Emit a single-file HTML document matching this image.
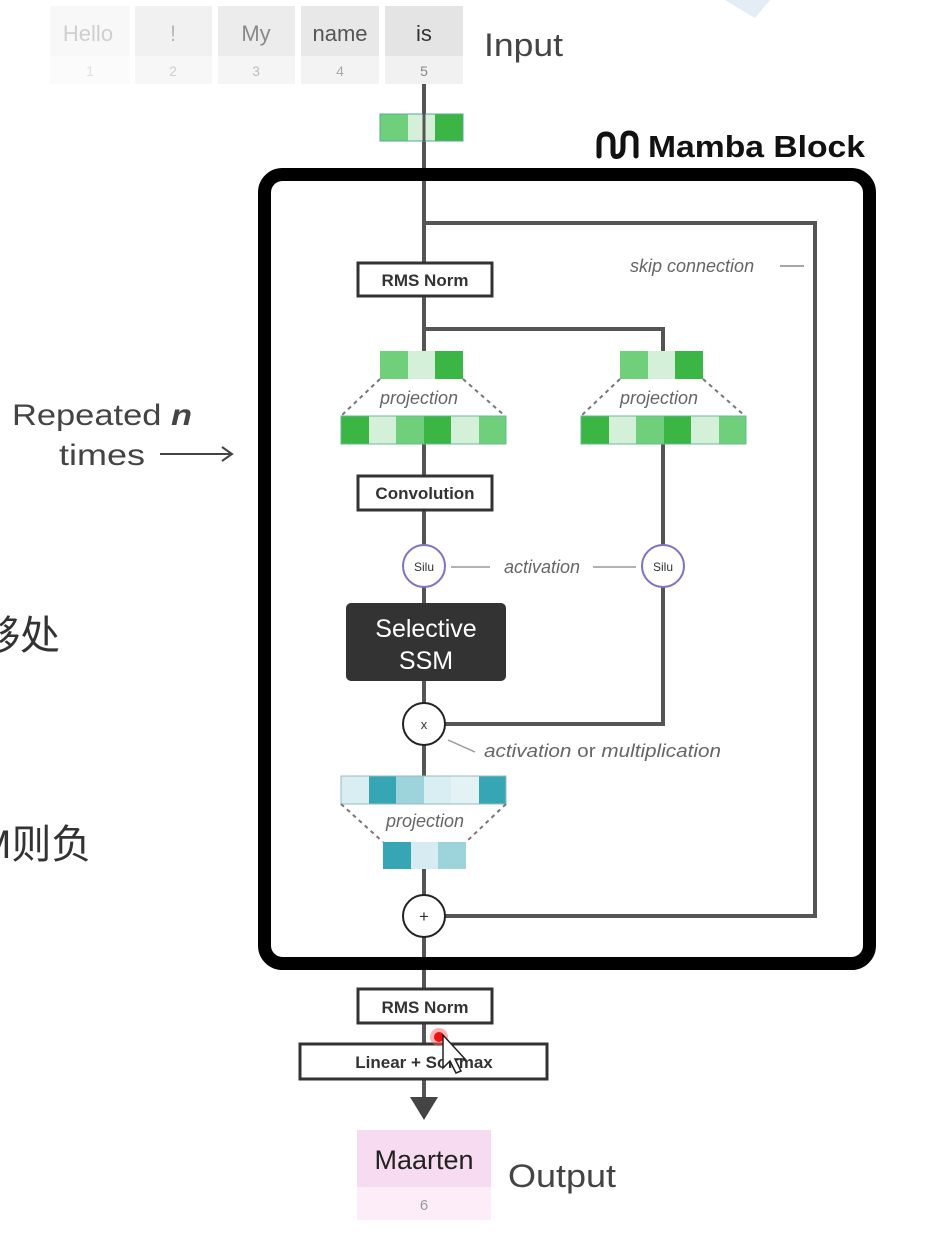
<!DOCTYPE html>
<html><head><meta charset="utf-8"><style>
html,body{margin:0;padding:0;background:#fff;width:927px;height:1239px;overflow:hidden}
svg{display:block}
text{font-family:"Liberation Sans","Noto Sans CJK SC",sans-serif}
</style></head><body>
<svg width="927" height="1239" viewBox="0 0 927 1239" xmlns="http://www.w3.org/2000/svg">
<path d="M725 0 L770 0 L755 18 Z" fill="#e4edf6"/>
<g font-size="22" text-anchor="middle">
<rect x="50" y="6" width="80" height="50" fill="#f8f8f8"/><rect x="50" y="56" width="80" height="28" fill="#fbfbfb"/>
<text x="88" y="41" fill="#cfcfcf">Hello</text><text x="90" y="76" font-size="14" fill="#e0e0e0">1</text>
<rect x="135" y="6" width="77" height="50" fill="#f1f1f1"/><rect x="135" y="56" width="77" height="28" fill="#f7f7f7"/>
<text x="173" y="41" fill="#b8b8b8">!</text><text x="173" y="76" font-size="14" fill="#cfcfcf">2</text>
<rect x="218" y="6" width="77" height="50" fill="#ececec"/><rect x="218" y="56" width="77" height="28" fill="#f5f5f5"/>
<text x="256" y="41" fill="#8a8a8a">My</text><text x="256" y="76" font-size="14" fill="#bdbdbd">3</text>
<rect x="301" y="6" width="78" height="50" fill="#e8e8e8"/><rect x="301" y="56" width="78" height="28" fill="#f3f3f3"/>
<text x="340" y="41" fill="#555">name</text><text x="340" y="76" font-size="14" fill="#aaa">4</text>
<rect x="385" y="6" width="78" height="50" fill="#e4e4e4"/><rect x="385" y="56" width="78" height="28" fill="#f1f1f1"/>
<text x="424" y="41" fill="#333">is</text><text x="424" y="76" font-size="14" fill="#888">5</text>
</g>
<text x="484" y="56" font-size="32" fill="#444" textLength="79" lengthAdjust="spacingAndGlyphs">Input</text>
<text x="12" y="425" font-size="30" fill="#444" textLength="180" lengthAdjust="spacingAndGlyphs">Repeated <tspan font-weight="bold" font-style="italic">n</tspan></text>
<text x="59" y="465" font-size="30" fill="#444" textLength="86" lengthAdjust="spacingAndGlyphs">times</text>
<path d="M160 454 H231 M222 447 L232 454 L222 461" stroke="#444" stroke-width="2" fill="none"/>
<text x="-20" y="649" font-size="40" fill="#333">够处</text>
<text x="-22" y="858" font-size="40" fill="#333">M则负</text>
<path d="M424 84 V1100" stroke="#555" stroke-width="4"/>
<rect x="380" y="114" width="28" height="27" fill="#6fcf7a"/><rect x="408" y="114" width="27" height="27" fill="#d5f0d8"/><rect x="435" y="114" width="28" height="27" fill="#3bb544"/>
<rect x="380" y="114" width="83" height="27" fill="none" stroke="#5a9" stroke-width="1"/>
<path d="M424 84 V141" stroke="#555" stroke-width="3"/>
<g transform="translate(596,130)" fill="none" stroke="#111" stroke-width="5" stroke-linecap="round">
<path d="M3 26 V12 Q3 4 10 4 Q17 4 17 12 V22 Q17 28 23 26 Q27 24 27 18 V10 Q27 3 33 3 Q39 3 40 9 V26"/>
</g>
<text x="648" y="157" font-size="31" font-weight="bold" fill="#111" textLength="217" lengthAdjust="spacingAndGlyphs">Mamba Block</text>
<rect x="264.5" y="174.5" width="605" height="789" rx="18" fill="none" stroke="#000" stroke-width="13"/>
<path d="M424 223 H815 V916 H440" stroke="#555" stroke-width="4" fill="none"/>
<text x="630" y="272" font-size="18" font-style="italic" fill="#666">skip connection</text>
<path d="M780 266 H804" stroke="#888" stroke-width="1.5"/>
<rect x="358" y="263" width="134" height="33" fill="#fff" stroke="#333" stroke-width="3"/>
<text x="425" y="286" font-size="17" font-weight="bold" fill="#333" text-anchor="middle">RMS Norm</text>
<path d="M424 329 H663 V724 H445" stroke="#555" stroke-width="4" fill="none"/>
<g id="pg">
<rect x="338" y="379" width="172" height="37" fill="#fff"/>
<rect x="380" y="351" width="28" height="28" fill="#6fcf7a"/><rect x="408" y="351" width="27" height="28" fill="#d5f0d8"/><rect x="435" y="351" width="28" height="28" fill="#3bb544"/>
<path d="M380 379 L341 416 M463 379 L505 416" stroke="#777" stroke-width="2" stroke-dasharray="4 4"/>
<text x="419" y="404" font-size="18" font-style="italic" fill="#666" text-anchor="middle">projection</text>
<rect x="341" y="416" width="28" height="28" fill="#3bb544"/><rect x="369" y="416" width="27" height="28" fill="#d5f0d8"/><rect x="396" y="416" width="28" height="28" fill="#6fcf7a"/><rect x="424" y="416" width="27" height="28" fill="#3bb544"/><rect x="451" y="416" width="28" height="28" fill="#d5f0d8"/><rect x="479" y="416" width="27" height="28" fill="#6fcf7a"/>
<rect x="341" y="416" width="165" height="28" fill="none" stroke="#6b9" stroke-width="1"/>
</g>
<use href="#pg" transform="translate(240,0)"/>
<rect x="358" y="476" width="134" height="34" fill="#fff" stroke="#333" stroke-width="3"/>
<text x="425" y="499" font-size="17" font-weight="bold" fill="#333" text-anchor="middle">Convolution</text>
<circle cx="424" cy="566" r="21" fill="#fff" stroke="#7f70c8" stroke-width="2"/>
<circle cx="663" cy="566" r="21" fill="#fff" stroke="#7f70c8" stroke-width="2"/>
<text x="424" y="571" font-size="12" fill="#333" text-anchor="middle">Silu</text>
<text x="663" y="571" font-size="12" fill="#333" text-anchor="middle">Silu</text>
<path d="M451 567 H490 M593 567 H636" stroke="#999" stroke-width="1.5"/>
<text x="542" y="573" font-size="18" font-style="italic" fill="#666" text-anchor="middle">activation</text>
<rect x="346" y="603" width="160" height="78" rx="5" fill="#333"/>
<text x="426" y="637" font-size="25" fill="#fff" text-anchor="middle">Selective</text>
<text x="426" y="669" font-size="25" fill="#fff" text-anchor="middle">SSM</text>
<circle cx="424" cy="724" r="21" fill="#fff" stroke="#222" stroke-width="2"/>
<text x="424" y="729" font-size="13" fill="#333" text-anchor="middle">x</text>
<path d="M448 740 L475 752" stroke="#999" stroke-width="1.5"/>
<text x="484" y="757" font-size="18" fill="#666" textLength="237" lengthAdjust="spacingAndGlyphs"><tspan font-style="italic">activation</tspan> or <tspan font-style="italic">multiplication</tspan></text>
<rect x="338" y="804" width="172" height="38" fill="#fff"/>
<rect x="341" y="776" width="28" height="28" fill="#d9eef2"/><rect x="369" y="776" width="27" height="28" fill="#37a6b4"/><rect x="396" y="776" width="28" height="28" fill="#9dd4dc"/><rect x="424" y="776" width="27" height="28" fill="#d9eef2"/><rect x="451" y="776" width="28" height="28" fill="#e3f2f5"/><rect x="479" y="776" width="27" height="28" fill="#37a6b4"/>
<rect x="341" y="776" width="165" height="28" fill="none" stroke="#9bb" stroke-width="1"/>
<path d="M341 804 L383 842 M506 804 L466 842" stroke="#777" stroke-width="2" stroke-dasharray="4 4"/>
<text x="425" y="827" font-size="18" font-style="italic" fill="#666" text-anchor="middle">projection</text>
<rect x="383" y="842" width="28" height="27" fill="#37a6b4"/><rect x="411" y="842" width="27" height="27" fill="#d6ecf2"/><rect x="438" y="842" width="28" height="27" fill="#9dd4dc"/>
<circle cx="424" cy="916" r="21" fill="#fff" stroke="#222" stroke-width="2"/>
<text x="424" y="922" font-size="17" fill="#333" text-anchor="middle">+</text>
<rect x="358" y="989" width="134" height="34" fill="#fff" stroke="#333" stroke-width="3"/>
<text x="425" y="1013" font-size="17" font-weight="bold" fill="#333" text-anchor="middle">RMS Norm</text>
<rect x="300" y="1044" width="247" height="35" fill="#fff" stroke="#333" stroke-width="3"/>
<text x="424" y="1068" font-size="17" font-weight="bold" fill="#333" text-anchor="middle">Linear + Softmax</text>
<circle cx="439" cy="1037" r="9" fill="#f66" opacity="0.5"/>
<circle cx="439" cy="1037" r="5" fill="#e11"/>
<path d="M443 1035 V1068 L450 1061 L456 1073 L461 1071 L455 1059 L465 1059 Z" fill="#fff" stroke="#222" stroke-width="1.5"/>
<path d="M410 1097 H438 L424 1120 Z" fill="#444"/>
<rect x="357" y="1130" width="134" height="57" fill="#f6dbf1"/>
<rect x="357" y="1187" width="134" height="33" fill="#fcedf9"/>
<text x="424" y="1169" font-size="27" fill="#222" text-anchor="middle">Maarten</text>
<text x="424" y="1210" font-size="15" fill="#999" text-anchor="middle">6</text>
<text x="508" y="1187" font-size="32" fill="#444" textLength="108" lengthAdjust="spacingAndGlyphs">Output</text>
</svg>
</body></html>
